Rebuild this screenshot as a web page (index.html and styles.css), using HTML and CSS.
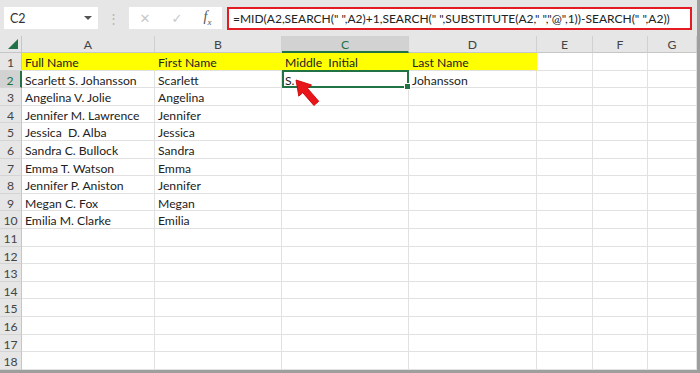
FILE: index.html
```html
<!doctype html>
<html lang="en">
<head>
    <meta charset="UTF-8">
    <title>Middle Initial - Excel</title>
    <link rel="stylesheet" href="styles.css">
</head>
<body>
    <div class="window">
        <!-- Formula bar -->
        <div class="formula-bar">
            <div class="name-box">
                <span>C2</span>
                <span class="caret"></span>
            </div>
            <div class="grip">&#8942;</div>
            <div class="fx-buttons">
                <span class="fx-btn">&#10005;</span>
                <span class="fx-btn">&#10003;</span>
                <span class="fx-btn fx"><i>f</i><sub>x</sub></span>
            </div>
            <div class="formula">=MID(A2,SEARCH(" ",A2)+1,SEARCH(" ",SUBSTITUTE(A2," ","@",1))-SEARCH(" ",A2))</div>
        </div>

        <!-- Sheet -->
        <div class="sheet">
            <div class="corner"><span class="select-all"></span></div>
            <div class="col-head">A</div>
            <div class="col-head">B</div>
            <div class="col-head active">C</div>
            <div class="col-head">D</div>
            <div class="col-head">E</div>
            <div class="col-head">F</div>
            <div class="col-head">G</div>

            <div class="row-head">1</div>
            <div class="cell fill">Full Name</div>
            <div class="cell fill">First Name</div>
            <div class="cell fill">Middle&nbsp; Initial</div>
            <div class="cell fill">Last Name</div>
            <div class="cell"></div><div class="cell"></div><div class="cell"></div>

            <div class="row-head active">2</div>
            <div class="cell">Scarlett S. Johansson</div>
            <div class="cell">Scarlett</div>
            <div class="cell selected">S.<span class="handle"></span></div>
            <div class="cell">Johansson</div>
            <div class="cell"></div><div class="cell"></div><div class="cell"></div>

            <div class="row-head">3</div>
            <div class="cell">Angelina V. Jolie</div>
            <div class="cell">Angelina</div>
            <div class="cell"></div><div class="cell"></div><div class="cell"></div><div class="cell"></div><div class="cell"></div>

            <div class="row-head">4</div>
            <div class="cell">Jennifer M. Lawrence</div>
            <div class="cell">Jennifer</div>
            <div class="cell"></div><div class="cell"></div><div class="cell"></div><div class="cell"></div><div class="cell"></div>

            <div class="row-head">5</div>
            <div class="cell">Jessica&nbsp; D. Alba</div>
            <div class="cell">Jessica</div>
            <div class="cell"></div><div class="cell"></div><div class="cell"></div><div class="cell"></div><div class="cell"></div>

            <div class="row-head">6</div>
            <div class="cell">Sandra C. Bullock</div>
            <div class="cell">Sandra</div>
            <div class="cell"></div><div class="cell"></div><div class="cell"></div><div class="cell"></div><div class="cell"></div>

            <div class="row-head">7</div>
            <div class="cell">Emma T. Watson</div>
            <div class="cell">Emma</div>
            <div class="cell"></div><div class="cell"></div><div class="cell"></div><div class="cell"></div><div class="cell"></div>

            <div class="row-head">8</div>
            <div class="cell">Jennifer P. Aniston</div>
            <div class="cell">Jennifer</div>
            <div class="cell"></div><div class="cell"></div><div class="cell"></div><div class="cell"></div><div class="cell"></div>

            <div class="row-head">9</div>
            <div class="cell">Megan C. Fox</div>
            <div class="cell">Megan</div>
            <div class="cell"></div><div class="cell"></div><div class="cell"></div><div class="cell"></div><div class="cell"></div>

            <div class="row-head">10</div>
            <div class="cell">Emilia M. Clarke</div>
            <div class="cell">Emilia</div>
            <div class="cell"></div><div class="cell"></div><div class="cell"></div><div class="cell"></div><div class="cell"></div>

            <div class="row-head">11</div>
            <div class="cell"></div><div class="cell"></div><div class="cell"></div><div class="cell"></div><div class="cell"></div><div class="cell"></div><div class="cell"></div>
            <div class="row-head">12</div>
            <div class="cell"></div><div class="cell"></div><div class="cell"></div><div class="cell"></div><div class="cell"></div><div class="cell"></div><div class="cell"></div>
            <div class="row-head">13</div>
            <div class="cell"></div><div class="cell"></div><div class="cell"></div><div class="cell"></div><div class="cell"></div><div class="cell"></div><div class="cell"></div>
            <div class="row-head">14</div>
            <div class="cell"></div><div class="cell"></div><div class="cell"></div><div class="cell"></div><div class="cell"></div><div class="cell"></div><div class="cell"></div>
            <div class="row-head">15</div>
            <div class="cell"></div><div class="cell"></div><div class="cell"></div><div class="cell"></div><div class="cell"></div><div class="cell"></div><div class="cell"></div>
            <div class="row-head">16</div>
            <div class="cell"></div><div class="cell"></div><div class="cell"></div><div class="cell"></div><div class="cell"></div><div class="cell"></div><div class="cell"></div>
            <div class="row-head">17</div>
            <div class="cell"></div><div class="cell"></div><div class="cell"></div><div class="cell"></div><div class="cell"></div><div class="cell"></div><div class="cell"></div>
            <div class="row-head">18</div>
            <div class="cell"></div><div class="cell"></div><div class="cell"></div><div class="cell"></div><div class="cell"></div><div class="cell"></div><div class="cell"></div>
        </div>

        <!-- callout arrow pointing at C2 -->
        <svg class="arrow" width="40" height="40" viewBox="0 0 40 40">
            <g transform="translate(3 3) rotate(49)">
                <path d="M0 0 L14 -8.5 L14 -3.2 L31 -3.2 L31 3.2 L14 3.2 L14 8.5 Z" fill="#e8161b" stroke="#c00" stroke-width="0.8" stroke-linejoin="round"/>
            </g>
        </svg>
    </div>
</body>
</html>
```

FILE: styles.css
```css
body {
    margin: 0;
    background-color: #9e9e9e;
    font-family: "Lato", "Liberation Sans", sans-serif;
}
.window {
    position: relative;
    width: 697px;
    height: 370px;
    background-color: #fff;
    overflow: hidden;
}

/* formula bar */
.formula-bar {
    display: flex;
    align-items: center;
    height: 36px;
    padding: 0 5px 0 4px;
    box-sizing: border-box;
    background-color: #e6e6e6;
}
.name-box {
    display: flex;
    align-items: center;
    justify-content: space-between;
    width: 94px;
    height: 22px;
    padding: 0 6px 0 6px;
    box-sizing: border-box;
    background-color: #fff;
    font-size: 12.5px;
    color: #333;
}
.caret {
    width: 0;
    height: 0;
    border-left: 4px solid transparent;
    border-right: 4px solid transparent;
    border-top: 4px solid #555;
}
.grip {
    width: 31px;
    text-align: center;
    color: #b5b5b5;
    font-size: 13px;
}
.fx-buttons {
    display: flex;
    align-items: center;
    justify-content: space-around;
    width: 93px;
    height: 22px;
    background-color: #fff;
}
.fx-btn {
    color: #c8c8c8;
    font-size: 13px;
    font-family: "DejaVu Sans", sans-serif;
}
.fx {
    color: #555;
    font-family: "Liberation Serif", serif;
    font-size: 14px;
}
.fx sub {
    font-size: 9px;
    font-style: italic;
}
.formula {
    flex: 1;
    height: 23px;
    margin-left: 5px;
    border: 2px solid #e31b23;
    box-sizing: border-box;
    background-color: #fff;
    padding-left: 4px;
    font-size: 12px;
    line-height: 19px;
    color: #222;
    white-space: nowrap;
}

/* sheet grid */
.sheet {
    display: grid;
    grid-template-columns: 22px 133px 127px 127px 128px 56px 55px 49px;
    grid-template-rows: 17px;
    grid-auto-rows: 17.6px;
    font-size: 12.2px;
    color: #222;
}
.corner,
.col-head,
.row-head {
    background-color: #e6e6e6;
    color: #444;
    box-sizing: border-box;
}
.corner {
    position: relative;
    border-right: 1px solid #c6c6c6;
    border-bottom: 1px solid #c6c6c6;
}
.select-all {
    position: absolute;
    right: 3px;
    bottom: 3px;
    width: 0;
    height: 0;
    border-left: 10px solid transparent;
    border-bottom: 10px solid #217346;
}
.col-head {
    text-align: center;
    line-height: 17px;
    border-right: 1px solid #d0d0d0;
    border-bottom: 1px solid #c6c6c6;
}
.col-head.active {
    background-color: #d2d2d2;
    color: #217346;
    border-bottom: 2px solid #217346;
}
.row-head {
    text-align: center;
    padding-top: 1px;
    line-height: 17px;
    border-right: 1px solid #c6c6c6;
    border-bottom: 1px solid #d4d4d4;
}
.row-head.active {
    background-color: #d2d2d2;
    color: #217346;
    border-right: 2px solid #217346;
}
.cell {
    position: relative;
    padding: 1px 0 0 3px;
    line-height: 17px;
    white-space: nowrap;
    border-right: 1px solid #e1e1e1;
    border-bottom: 1px solid #e1e1e1;
    box-sizing: border-box;
}
.cell.fill {
    background-color: #ffff00;
    border-right-color: #ffff00;
}
.cell.selected::after {
    content: "";
    position: absolute;
    left: 0;
    top: -1px;
    right: -1px;
    bottom: -1px;
    border: 2px solid #217346;
}
.handle {
    position: absolute;
    right: -3px;
    bottom: -3px;
    width: 5px;
    height: 5px;
    background-color: #217346;
    border: 1px solid #fff;
    z-index: 1;
}

/* callout */
.arrow {
    position: absolute;
    left: 293px;
    top: 77px;
}
```
